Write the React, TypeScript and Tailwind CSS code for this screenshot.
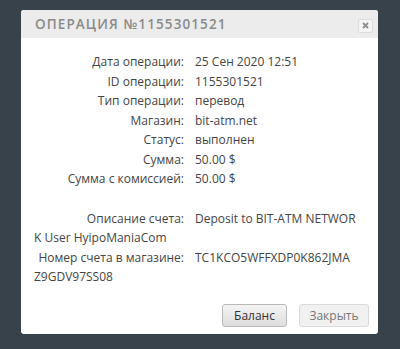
import React from 'react';

const rows = [
  { label: 'Дата операции:', value: '25 Сен 2020 12:51' },
  { label: 'ID операции:', value: '1155301521' },
  { label: 'Тип операции:', value: 'перевод' },
  { label: 'Магазин:', value: 'bit-atm.net' },
  { label: 'Статус:', value: 'выполнен' },
  { label: 'Сумма:', value: '50.00 $' },
  { label: 'Сумма с комиссией:', value: '50.00 $' },
];

const font = { fontFamily: '"Open Sans", "Liberation Sans", sans-serif' };

const Row = ({ label, children }: { label: string; children: React.ReactNode }) => (
  <div className="h-[19.5px] leading-[19.5px] whitespace-nowrap">
    <span className="inline-block w-[150px] text-right mr-[11px]">{label}</span>
    {children}
  </div>
);

export default function App() {
  return (
    <div className="w-[400px] h-[349px] bg-[#37424b] pt-[10px] pl-[21px]" style={font}>
      <div className="w-[357px] h-[324px] bg-white rounded-[3px] flex flex-col overflow-hidden">
        {/* header */}
        <div className="h-[28px] bg-[#ececec] flex items-center justify-between pl-[14px] pr-[5px]">
          <span className="text-[13.5px] font-semibold tracking-[1.1px] text-[#8a8a8a]">ОПЕРАЦИЯ №1155301521</span>
          <button className="w-[15px] h-[14px] mt-[3px] border border-[#dcdcdc] bg-[#f4f4f4] rounded-[2px] flex items-center justify-center">
            <svg width="7" height="7" viewBox="0 0 7 7">
              <path d="M1 1L6 6M6 1L1 6" stroke="#8e8e8e" strokeWidth="1.8" />
            </svg>
          </button>
        </div>

        {/* body */}
        <div className="flex-1 pl-[13px] pt-[14px] text-[12px] text-[#444]">
          {rows.map((r) => (
            <Row key={r.label} label={r.label}>{r.value}</Row>
          ))}
          <div className="h-[20px]" />
          <Row label="Описание счета:">Deposit to BIT-ATM NETWOR</Row>
          <div className="h-[19.5px] leading-[19.5px]">K User HyipoManiaCom</div>
          <Row label="Номер счета в магазине:">TC1KCO5WFFXDP0K862JMA</Row>
          <div className="h-[19.5px] leading-[19.5px]">Z9GDV97SS08</div>
        </div>

        {/* footer */}
        <div className="flex justify-end gap-[12px] pr-[9px] pb-[7px]">
          <button className="w-[65px] h-[23px] rounded-[3px] border border-[#b9b9b9] bg-gradient-to-b from-[#f4f4f4] to-[#dedede] text-[12px] text-[#333]">
            Баланс
          </button>
          <button className="w-[70px] h-[23px] rounded-[3px] border border-[#dadada] bg-[#f1f1f1] text-[12px] text-[#777]">
            Закрыть
          </button>
        </div>
      </div>
    </div>
  );
}
